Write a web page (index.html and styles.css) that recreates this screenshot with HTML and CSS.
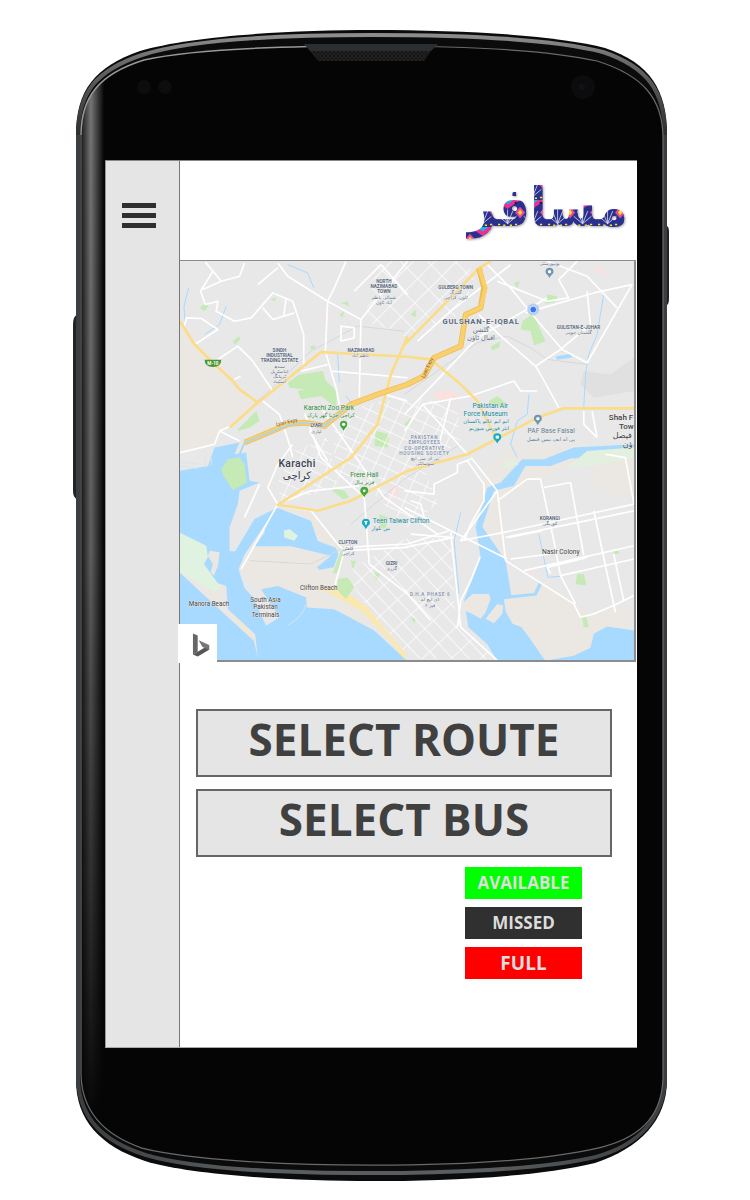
FILE: index.html
```html
<!DOCTYPE html>
<html lang="en">
<head>
<meta charset="utf-8">
<meta name="viewport" content="width=device-width, initial-scale=1">
<title>مسافر</title>
<link rel="stylesheet" href="styles.css">
</head>
<body>
<div class="device">
  <svg class="device-body" viewBox="76 30 591 1151" preserveAspectRatio="none" aria-hidden="true">
    <defs>
      <linearGradient id="rim" x1="0" y1="0" x2="0" y2="1">
        <stop offset="0" stop-color="#8d8d8d"/><stop offset=".3" stop-color="#666"/><stop offset="1" stop-color="#2c2e2f"/>
      </linearGradient>
      <linearGradient id="chin" x1="0" y1="0" x2="1" y2="0">
        <stop offset="0" stop-color="#3b3e40"/><stop offset=".3" stop-color="#5a5d5f"/><stop offset=".7" stop-color="#5a5d5f"/><stop offset="1" stop-color="#3b3e40"/>
      </linearGradient>
      <linearGradient id="edge" x1="0" y1="0" x2="1" y2="0">
        <stop offset="0" stop-color="#222"/><stop offset=".4" stop-color="#777"/><stop offset=".65" stop-color="#484848"/><stop offset="1" stop-color="#050505"/>
      </linearGradient>
      <linearGradient id="fade" x1="0" y1="0" x2="0" y2="1">
        <stop offset="0" stop-color="#fff"/><stop offset=".45" stop-color="#ccc"/><stop offset=".85" stop-color="#444"/><stop offset="1" stop-color="#000"/>
      </linearGradient>
      <mask id="edge-mask"><rect x="76" y="70" width="40" height="1060" fill="url(#fade)"/></mask>
      <pattern id="mesh" width="4" height="4" patternUnits="userSpaceOnUse"><rect width="4" height="4" fill="#111"/><path d="M0 0l4 4M4 0l-4 4" stroke="#222"/></pattern>
      <clipPath id="face"><path d="M81 135C81 97 99 74 144 60C198 48 290 46 372 46C465 46 548 50 597 61C642 75 663 98 663 138V1078C662 1112 645 1136 602 1147C544 1161 450 1165 372 1165C284 1165 190 1160 142 1148C101 1134 82 1108 81 1075Z"/></clipPath>
    </defs>
    <path d="M77 315Q73 316 73 325V490Q73 498 77 499Z" fill="#222"/>
    <path d="M666 226h1q2 1 2 6v66q0 6-2 7h-1z" fill="#222"/>
    <path d="M76 135C76 90 95 67 140 51C190 36 290 30 372 30C470 30 560 36 605 48C650 63 667 90 667 135V1080C667 1120 640 1148 595 1163C540 1177 440 1181 372 1181C290 1181 190 1175 145 1161C100 1146 76 1120 76 1080Z" fill="#0b0b0b"/>
    <path d="M78 130V1080C80 1118 102 1141 146 1155C194 1169 290 1173 372 1173C440 1173 540 1170 595 1157C640 1145 663 1117 665 1080V130" fill="none" stroke="url(#chin)" stroke-width="4"/>
    <path d="M78 135C78 92 97 70 142 55C192 39 290 35 372 35C470 35 556 40 603 52C648 67 665 92 665 135" fill="none" stroke="url(#rim)" stroke-width="4"/>
    <path d="M81 135C81 97 99 74 144 60C198 48 290 46 372 46C465 46 548 50 597 61C642 75 663 98 663 138V1078C662 1112 645 1136 602 1147C544 1161 450 1165 372 1165C284 1165 190 1160 142 1148C101 1134 82 1108 81 1075Z" fill="#050505"/>
    <g clip-path="url(#face)"><rect x="82" y="70" width="22" height="1060" fill="url(#edge)" mask="url(#edge-mask)"/></g>
    <path d="M81 135C81 97 99 74 144 60C198 48 290 46 372 46" fill="none" stroke="#999" stroke-width="1.5"/>
    <path d="M372 46C465 46 548 50 597 61C642 75 663 98 663 138V1078C662 1112 645 1136 602 1147C544 1161 450 1165 372 1165C284 1165 190 1160 142 1148C101 1134 82 1108 81 1075V135" fill="none" stroke="#6a6a6a" stroke-width="1.2"/>
    <path d="M304 44H438L431 51H310Z" fill="#2b2e30"/>
    <path d="M310 51H431L424 61H318Z" fill="url(#mesh)"/>
    <circle cx="144" cy="87" r="7" fill="#0d0d0d"/><circle cx="165" cy="87" r="7" fill="#0d0d0d"/>
    <circle cx="583" cy="87" r="12" fill="#0c0c0d"/><circle cx="582" cy="87" r="3" fill="#12121c"/>
  </svg>

  <div class="screen">
    <nav class="rail" aria-label="Main">
      <button class="menu" type="button" aria-label="Open menu"><span></span><span></span><span></span></button>
    </nav>
    <main class="panel">
      <header class="header">
        <svg class="logo" viewBox="0 0 168 92" role="img" aria-label="مسافر">
          <defs>
            <pattern id="truck" width="25" height="27" patternUnits="userSpaceOnUse" patternTransform="translate(4 8)">
              <g transform="scale(.74)">
              <rect width="34" height="37" fill="#29308f"/>
              <path d="M0 0H34L17 12Z" fill="#ee2e93"/>
              <path d="M9 0h16l-8 6z" fill="#1cb4d8"/>
              <path d="M0 9l7 8-7 8zM34 9l-7 8 7 8z" fill="#f0479b"/>
              <path d="M0 13l3 4-3 4zM34 13l-3 4 3 4z" fill="#ffe51b"/>
              <path d="M17 32V13M17 32L10 15M17 32L24 15M17 32L5 22M17 32L29 22" stroke="#eee" stroke-width="1"/>
              <path d="M4 33h3M11 34h3M20 34h3M27 33h3" stroke="#ffe51b" stroke-width="2"/>
              <circle cx="6" cy="4" r="1.5" fill="#171335"/><circle cx="28" cy="4" r="1.5" fill="#171335"/>
              </g>
            </pattern>
          </defs>
          <text class="logo-text" x="82" y="61" text-anchor="middle" direction="rtl">مسافر</text>
        </svg>
      </header>

      <section class="map" aria-label="Map of Karachi">
        <svg class="map-art" viewBox="6 9 1365 1200" preserveAspectRatio="xMidYMid slice">
          <defs>
            <pattern id="grid-dha" width="60" height="36" patternUnits="userSpaceOnUse" patternTransform="rotate(47)"><path d="M0 0H60M0 0V36" class="lane"/></pattern>
            <pattern id="grid-town" width="58" height="46" patternUnits="userSpaceOnUse" patternTransform="rotate(-45)"><path d="M0 0H58M0 0V46" class="lane"/></pattern>
            <pattern id="grid-old" width="42" height="34" patternUnits="userSpaceOnUse" patternTransform="rotate(25)"><path d="M0 0H42M0 0V34" class="lane"/></pattern>
          </defs>
          <rect width="1400" height="1240" fill="#e8e8e8"/>
          <!-- sandy ground -->
          <g class="sand">
            <path d="M6 190L50 260L165 370L240 435L150 520L110 545L6 600Z"/>
            <path d="M182 925L260 820L300 750L400 765L500 860L480 990L640 1110L690 1195L590 1120L400 1050L250 1000Z"/>
            <path d="M890 720L930 640L1000 560L1371 575V730L1250 690L1240 590L1090 665L970 730L985 900L900 870Z"/>
            <path d="M1000 1000L1085 965L1200 1040L1240 1070L1350 1040L1371 1210H1090L930 1030Z"/>
          </g>
          <path d="M1220 340L1300 350L1371 300V400L1250 420L1210 380Z" fill="#e0e0e0"/>
          <!-- water -->
          <g class="water">
            <path d="M6 640L90 625L110 570L185 555L170 590L205 585L215 670L245 675L185 700L180 740L155 810L155 882L172 882L230 785L300 750L268 792L200 892L182 936L200 992L225 1020L265 1106L305 1080L250 996L300 986L385 1020L388 1051L470 1056L590 1120L690 1212H6Z"/>
            <path d="M300 752L400 791L420 851L475 871L482 892L468 930L425 938L418 930L460 895L340 867L230 867L260 826L265 780Z"/>
            <path d="M895 808L930 690L970 675L1035 605L1100 605L1190 570L1371 560V595L1180 603L1120 625L1045 625L1010 685L950 700L915 808L985 910L1002 1014L1070 1007L1086 974L1096 977L1078 1015L980 1026L985 1063L1006 1100L1033 1110L1060 1147L1105 1212H960L930 1161L873 1110L860 1030L910 900Z"/>
            <path d="M1095 1212L1190 1196L1240 1172L1250 1130L1290 1108L1371 1120V1212Z"/>
            <path d="M1135 296L1180 289L1185 299L1140 306Z"/>
          </g>
          <path class="stream" d="M32 90L18 145L22 200M145 145L125 200L80 230M1280 110L1260 230L1235 290L1225 350L1220 450M1055 410L1050 470L1020 490L1000 560L1020 600M330 20L390 45L408 90M480 290L485 375M850 765L830 850L845 1010M1085 830L1112 960L1150 957M505 415L525 440"/>
          <path class="gate" d="M0 612L60 620M0 625L60 632M82 600V630M100 600V625M330 1105Q380 1075 384 1040"/>
          <!-- shore land -->
          <g class="sand"><path d="M6 946L130 1061L228 1151L240 1203L232 1131L150 1056L145 986L100 971L6 860ZM95 880L125 885L120 925L108 955L98 945L105 920L90 895Z"/>
          <path d="M858 1035L885 1010L935 1010L940 1025L925 1065L910 1085L885 1070L862 1060ZM940 1065L960 1040L978 1045L975 1070L950 1098L925 1085Z"/></g>
          <path d="M6 826L85 865L90 900L78 920L128 990L110 1003L6 945ZM318 820L335 815L360 835L350 850L320 840Z" fill="#e0f3e1"/>
          <path d="M230 1151L160 1070L200 1110M400 985L480 988L570 1050L640 1140L690 1195L680 1205L610 1120L550 1060L460 1010Z" fill="#fae8ae"/>
          <!-- parks -->
          <g class="park">
            <path d="M330 375L365 350L435 340L445 370L478 400L475 450L430 415L370 425L360 400L380 395L335 390Z"/>
            <path d="M180 515L205 490L235 460L245 490L215 510L180 520ZM130 635L150 605L185 600L200 620L208 675L165 698L135 650ZM595 520L635 530L630 570L590 565Z"/>
            <path d="M65 150L80 137L92 145L80 160ZM165 250L183 235L188 245L170 260ZM278 125L293 118V130ZM398 265L412 262V273L400 275ZM490 135L510 130L515 145ZM485 170L500 160L495 180Z"/>
            <path d="M1035 190L1070 165L1080 195L1105 250L1070 262L1060 220L1030 215ZM1110 110L1140 115L1138 130L1105 138ZM1010 75L1028 70L1020 90ZM940 265L970 250L965 270L945 278ZM935 430L960 415L990 440L975 450L940 440ZM700 170L715 155L715 178Z"/>
            <path d="M480 965L510 960L530 990L505 1025L480 1000ZM490 880L505 870L480 945L465 950ZM455 690L500 700L515 720L495 725ZM605 770L630 780L625 815L607 810ZM1200 950L1220 950L1228 985L1195 980ZM1215 1080H1228L1235 1110H1220ZM520 910L535 910L525 940ZM590 945L610 950L595 970ZM700 1080L715 1085L710 1100ZM1310 883L1325 880V890H1310ZM681 500L705 475L690 515Z"/>
          </g>
          <path d="M970 620L1010 605L1025 620L990 635ZM1165 635L1230 580L1371 570V600L1240 625Z" fill="#e3f0df"/>
          <path d="M765 410L795 395L840 405L840 430L790 432ZM635 685L660 680L660 720L640 725ZM1255 20L1290 45L1280 52L1250 30ZM450 168H462V180H450ZM1050 935H1070V950H1045Z" fill="#f8e1df"/>
          <!-- street grids -->
          <path d="M500 945L590 895L690 840L820 840L835 1080L950 1205L700 1205L590 1080Z" fill="url(#grid-dha)"/>
          <path d="M600 10H870L890 60L850 170L690 240L560 190Z" fill="url(#grid-town)"/>
          <path d="M470 520L560 440L690 420L840 440L850 560L730 600L780 740L690 810L580 700L470 660Z" fill="url(#grid-old)"/>
          <path d="M300 675L350 580L450 540L480 690L310 735Z" fill="url(#grid-old)"/>
          <path class="rail-line" d="M160 505L400 280L540 205L680 220M681 410L900 255L990 235L1060 270L1110 305L1230 320M215 910L400 920L520 860M520 800L680 665L850 560"/>
          <g class="road">
            <path d="M18 208L25 180L70 182L120 215L50 260M82 12L105 40L68 100L82 140L120 130L115 160L170 190L220 180L285 105L345 130L378 230V330M255 150L285 185L350 165M325 120L318 175M130 70L75 95M85 15L130 70L185 55L200 15"/>
            <path d="M300 15L330 55L450 130M240 80L300 30M505 10L470 90L450 130L443 280M450 130L550 185L545 420M370 340L450 320M443 280L475 390L485 440M120 305L180 265L225 310L285 400M170 365L188 355M465 340L690 360M490 205L530 210V240L490 250ZM550 185L690 10M530 100L610 20L690 110"/>
            <path d="M255 430L305 470L335 560L345 600M6 585L110 560L125 520L185 550M125 520L160 505M395 520L450 610M620 410L690 430"/>
            <path d="M380 465L430 600L560 720L575 920M430 450L620 720L780 830M575 920L690 1010L760 1090M300 740L190 935M300 740L270 690L300 620L345 560M245 680L200 780M310 735L400 700L545 685"/>
            <path d="M310 745L400 760L480 860L500 880L470 990M500 870L690 860L815 820M500 880L690 870"/>
            <path d="M720 250L820 160L1000 20M681 470L900 240L1110 120M1110 10L1230 55L1320 150M1045 165L1250 105L1365 80L1230 315L1155 275L1065 170L1000 90L930 20M905 170L970 235L1075 325L1090 350L1145 450M735 440L880 415L1010 370L1030 400L1080 400M1230 100L1240 200L1150 275L1075 325M960 70L1110 130L1175 120L1145 65L1200 10"/>
            <path d="M735 440L681 520M735 440L870 590M820 420L780 580M881 600L960 700L985 910L1190 1040L1210 1080L1250 1070L1310 1045L1371 1015M960 700L850 850L980 825L1371 740M985 840L1371 760M960 730L1050 665L1090 665L1130 850L1150 955L1195 1040M1100 690L1180 675L1220 895M1250 760L1315 1065M1040 940L1371 865M1150 955L1371 905M1310 890L1340 1030M1000 905L1120 890M995 840L1095 820M1285 590L1345 600L1371 740M1220 460V500L1260 540M1245 460L1260 540M1120 950L1110 930L1230 900"/>
            <path d="M681 750L840 830L990 905M820 825L850 1110L960 1210M870 610L920 680V730L880 800L860 850M681 870L830 840M700 730L730 740L740 780M681 700L770 710L770 680L840 645V620L880 605M908 900L880 970L850 1030L840 1110M700 830L820 840"/>
          </g>
          <g class="highway">
            <path d="M6 190L48 258L105 315L165 370L185 395L240 435M155 510L240 435L430 283L690 297L760 305L850 380L900 430L955 540"/>
            <path d="M690 235L640 350L600 500L520 600L300 742L420 760L520 730L690 640L870 590L1080 480L1160 452H1371"/>
            <path d="M681 260L790 150L905 30L940 10"/>
          </g>
          <g class="express-edge"><path d="M200 555L330 500L380 495L440 505L520 440L600 410L690 380L740 355L770 300L850 265L865 170L910 150L920 90L905 30"/></g>
          <g class="express"><path d="M200 555L330 500L380 495L440 505L520 440L600 410L690 380L740 355L770 300L850 265L865 170L910 150L925 90L905 30"/></g>
          <path d="M185 590L200 555L330 503L380 495L440 505L500 455" class="canal"/>
          <!-- pins -->
          <g>
            <g fill="#43a83f"><path d="M498 520C494 510 487 509 487 500A11 11 0 0 1 509 500C509 509 502 510 498 520ZM560 720C556 709 548 708 548 700A12 12 0 0 1 572 700C572 708 564 709 560 720Z"/></g>
            <g fill="#13abc4"><path d="M565 816C561 805 553 803 553 796A12 12 0 0 1 577 796C577 803 569 805 565 816ZM960 558C956 548 948 546 948 539A12 12 0 0 1 972 539C972 546 964 548 960 558Z"/></g>
            <g fill="#7297ac"><path d="M1082 503C1078 492 1070 490 1070 483A12 12 0 0 1 1094 483C1094 490 1086 492 1082 503ZM1117 60C1113 50 1105 48 1105 41A12 12 0 0 1 1129 41C1129 48 1121 50 1117 60Z"/></g>
            <g fill="#fff"><circle cx="498" cy="500" r="5"/><circle cx="560" cy="700" r="4"/><path d="M560 791h10v3h-2v7h-6v-7h-2z"/><rect x="955" y="534" width="10" height="9"/><circle cx="1082" cy="483" r="5"/><circle cx="1117" cy="41" r="5"/></g>
          </g>
          <circle cx="1068" cy="155" r="18" fill="#b9cdf3"/><circle cx="1068" cy="155" r="10" fill="#3679ef" stroke="#fff" stroke-width="2"/>
          <path d="M80 306H130Q130 328 105 328Q80 328 80 306Z" fill="#4a9635"/>
          <!-- place names -->
          <g class="label">
            <text class="tiny white" x="105" y="322">M-10</text>
            <g class="tiny area"><text x="619" y="75">NORTH</text><text x="619" y="91">NAZIMABAD</text><text x="619" y="106">TOWN</text><text x="835" y="92">GULBERG TOWN</text><text x="305" y="282">SINDH</text><text x="305" y="298">INDUSTRIAL</text><text x="305" y="313">TRADING ESTATE</text><text x="550" y="282">NAZIMABAD</text><text x="416" y="509">LYARI</text><text x="1204" y="214">GULISTAN-E-JOHAR</text><text x="511" y="861">CLIFTON</text><text x="642" y="922">GIZRI</text><text x="1118" y="787">KORANGI</text></g>
            <g class="tiny area pale"><text x="741" y="544">PAKISTAN</text><text x="741" y="560">EMPLOYEES</text><text x="741" y="576">CO-OPERATIVE</text><text x="741" y="591">HOUSING SOCIETY</text><text x="758" y="1016">D.H.A PHASE 6</text></g>
            <g class="urdu"><text x="619" y="122">شمالی ناظم</text><text x="619" y="137">آباد ٹاؤن</text><text x="835" y="108">گلبرگ</text><text x="835" y="123">ٹاؤن، کراچی</text><text x="305" y="331">سندھ</text><text x="305" y="346">انڈسٹریل</text><text x="305" y="361">ٹریڈنگ</text><text x="305" y="376">اسٹیٹ</text><text x="548" y="299">ناظم آباد</text><text x="416" y="525">لیاری</text><text x="1204" y="230">گلستان جوہر</text><text x="1117" y="22">یونیورسٹی</text><text x="511" y="877">کلفٹن</text><text x="511" y="893">کراچی</text><text x="642" y="938">گزری</text><text x="1118" y="803">کورنگی</text><text x="742" y="606">پی ای سی ایچ</text><text x="742" y="622">سوسائٹی</text><text x="758" y="1032">ڈی ایچ اے</text><text x="758" y="1048">فیز ۶</text></g>
            <text class="district" x="911" y="197">GULSHAN-E-IQBAL</text>
            <g class="urdu mid"><text x="911" y="222">گلشن</text><text x="911" y="246">اقبال ٹاؤن</text></g>
            <g class="green"><text x="454" y="458">Karachi Zoo Park</text><text x="560" y="659">Frere Hall</text><text class="urdu" x="460" y="477">کراچی چڑیا گھر پارک</text><text class="urdu" x="560" y="678">فریر ہال</text></g>
            <g class="teal"><text x="939" y="452">Pakistan Air</text><text x="925" y="475">Force Museum</text><text x="671" y="797">Teen Talwar Clifton</text><text class="urdu" x="926" y="497">ایم ایم عالم پاکستان</text><text class="urdu" x="935" y="518">ایئر فورس میوزیم</text><text class="urdu" x="610" y="817">تین تلوار</text></g>
            <g class="slate"><text x="1122" y="527">PAF Base Faisal</text><text class="urdu" x="1121" y="549">پی اے ایف بیس فیصل</text></g>
            <g class="town"><text x="358" y="627">Karachi</text><text class="urdu large" x="358" y="665">کراچی</text></g>
            <g class="shah"><text x="1332" y="486">Shah F</text><text x="1348" y="513">Tow</text><text class="urdu" x="1336" y="540">فیصل</text><text class="urdu" x="1352" y="569">ؤن</text></g>
            <g class="place"><text class="nasir" x="1151" y="889">Nasir Colony</text><text x="423" y="998">Clifton Beach</text><text x="93" y="1045">Manora Beach</text><text x="263" y="1033">South Asia</text><text x="263" y="1056">Pakistan</text><text x="263" y="1080">Terminals</text></g>
            <text class="exp" transform="translate(328 498) rotate(-12)">Lyari Expy</text>
            <text class="exp" transform="translate(754 332) rotate(-65)">Lyari Expy</text>
          </g>
        </svg>
        <span class="bing"><svg viewBox="0 0 20 26" role="img" aria-label="Bing"><path d="M1 1L6 3V20L1 23Z" fill="#666"/><path d="M6 20L18 13V18L6 25L1 23Z" fill="#555"/><path d="M7 8L18 13V18L11 15Z" fill="#777"/></svg></span>
      </section>

      <section class="actions">
        <button class="action" type="button">SELECT ROUTE</button>
        <button class="action" type="button">SELECT BUS</button>
        <ul class="legend">
          <li class="available">AVAILABLE</li>
          <li class="missed">MISSED</li>
          <li class="full">FULL</li>
        </ul>
      </section>
    </main>
  </div>
</div>
</body>
</html>
```
FILE: styles.css
```css
* { box-sizing: border-box; }
body { margin: 0; padding: 30px 83px 19px 76px; background: #fff; font-family: "Open Sans", "Noto Sans", sans-serif; }
.device { position: relative; padding: 130px 30px 133px 29px; }
.device-body { position: absolute; inset: 0; width: 100%; height: 100%; overflow: visible; }
.screen { position: relative; display: grid; grid-template-columns: 75px minmax(0, 1fr); background: #fff; border-top: 1px solid #888; border-bottom: 1px solid #aaa; }
.rail { background: #e5e5e5; border-left: 1px solid #999; border-right: 1px solid #777; padding: 42px 0 0 16px; }
.menu { display: grid; gap: 5px; width: 34px; padding: 0; border: 0; background: none; cursor: pointer; }
.menu span { height: 5px; background: #2f2f2f; }
.header { display: flex; justify-content: flex-end; height: 99px; padding: 4px 3px 0 0; }
.logo { width: 168px; height: 92px; overflow: visible; }
.logo-text { font: bold 54px "DejaVu Sans Condensed", "DejaVu Sans", sans-serif; fill: url(#truck); filter: drop-shadow(1px 1px 1px #aaa); }
.map { position: relative; margin-right: 1px; border: solid #8c8c8c; border-width: 1px 2px 2px 0; }
.map-art { display: block; width: 100%; height: auto; }
.bing { position: absolute; left: -2px; bottom: -3px; display: flex; width: 39px; height: 39px; padding: 8px 6px 5px 14px; background: #fff; }
.bing svg { width: 19px; height: 26px; }
.actions { display: grid; gap: 12px; padding: 47px 25px 68px 16px; }
.action { height: 68px; padding: 0 0 8px; border: 2px solid #666; background: #e5e5e5; color: #404040; font: bold 44px/54px "Open Sans", "Noto Sans", sans-serif; cursor: pointer; }
.legend { display: grid; gap: 8px; width: 117px; margin: -2px 30px 0 auto; padding: 0; list-style: none; color: #ddd; font-weight: bold; text-align: center; }
.legend li { height: 32px; font-size: 17px; line-height: 32px; }
.available { background: #0f0; }
.missed { background: #303030; }
.legend .full { background: #f00; font-size: 19px; }

.sand path { fill: #ebe8e3; }
.water path { fill: #a8daff; }
.park path { fill: #c5eab5; }
.stream { fill: none; stroke: #a8daff; stroke-width: 3px; }
.gate { fill: none; stroke: #d7e5ed; stroke-width: 3px; }
.lane { fill: none; stroke: #fff; stroke-width: 4px; }
.rail-line { fill: none; stroke: #d5d8db; stroke-width: 3px; }
.road path { fill: none; stroke: #fff; stroke-width: 5px; stroke-linejoin: round; }
.highway path { fill: none; stroke: #fbdc87; stroke-width: 8px; stroke-linejoin: round; }
.express-edge path { fill: none; stroke: #edbd58; stroke-width: 17px; stroke-linejoin: round; }
.express path { fill: none; stroke: #fad06c; stroke-width: 12px; stroke-linejoin: round; }
.canal { fill: none; stroke: #a8d4ee; stroke-width: 5px; }
.label { font-family: Roboto, "DejaVu Sans", sans-serif; font-size: 20px; text-anchor: middle; stroke: #f0f0f0; stroke-width: 2px; }
.label text { paint-order: stroke; }
.tiny { font-size: 14px; font-weight: bold; }
.area { fill: #5c6b80; }
.pale { fill: #8b9bb3; letter-spacing: 2px; }
.white { fill: #fff; stroke: none; }
.urdu { font-family: "DejaVu Sans", sans-serif; font-size: 14px; fill: #66738a; }
.mid { font-size: 20px; fill: #5c6b80; }
.district { font-size: 23px; font-weight: bold; letter-spacing: 2px; fill: #5c6b80; }
.green, .green .urdu { fill: #278a34; }
.teal, .teal .urdu { fill: #138796; }
.slate, .slate .urdu { fill: #607d8b; }
.green .urdu, .teal .urdu, .slate .urdu { font-size: 16px; }
.town { font-size: 31px; font-weight: 500; fill: #3c4353; letter-spacing: 1px; }
.town .urdu { font-size: 31px; fill: #3c4353; letter-spacing: 0; }
.shah { font-size: 24px; font-weight: 500; fill: #444; }
.shah .urdu { font-size: 24px; fill: #444; }
.place { font-size: 19px; fill: #444; }
.nasir { font-size: 20px; }
.exp { font-size: 15px; fill: #8b541c; stroke: none; }
```
